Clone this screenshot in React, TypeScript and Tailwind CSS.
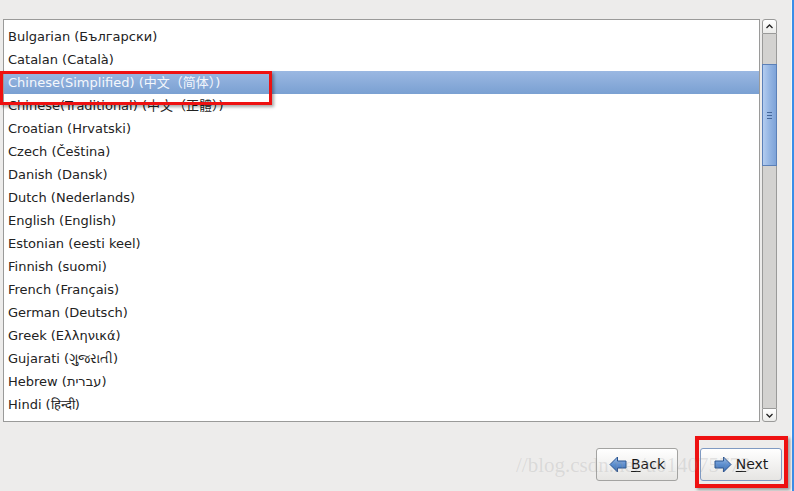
import React from "react";

const langs: string[] = [
  "Bulgarian (Български)",
  "Catalan (Català)",
  "Chinese(Simplified) (中文（简体）)",
  "Chinese(Traditional) (中文（正體）)",
  "Croatian (Hrvatski)",
  "Czech (Čeština)",
  "Danish (Dansk)",
  "Dutch (Nederlands)",
  "English (English)",
  "Estonian (eesti keel)",
  "Finnish (suomi)",
  "French (Français)",
  "German (Deutsch)",
  "Greek (Ελληνικά)",
  "Gujarati (ગુજરાતી)",
  "Hebrew (עברית)",
  "Hindi (हिन्दी)",
];

function Arrow({ dir }: { dir: "left" | "right" }) {
  return (
    <svg width="18" height="17" viewBox="0 0 18 17" style={{ transform: dir === "right" ? "scaleX(-1)" : undefined }}>
      <defs>
        <linearGradient id={"ag" + dir} x1="0" y1="0" x2="0" y2="1">
          <stop offset="0" stopColor="#9fbfe8" />
          <stop offset="0.5" stopColor="#5d8fd0" />
          <stop offset="1" stopColor="#3a6db3" />
        </linearGradient>
      </defs>
      <path
        d="M1 8.5 L8.5 1 L8.5 5 L17 5 L17 12 L8.5 12 L8.5 16 Z"
        fill={`url(#ag${dir})`}
        stroke="#2a5490"
        strokeWidth="1"
        strokeLinejoin="round"
      />
    </svg>
  );
}

export default function App() {
  return (
    <div
      className="w-[794px] h-[491px] bg-[#edeceb] flex overflow-hidden relative"
      style={{ fontFamily: '"DejaVu Sans", "Noto Sans CJK SC", sans-serif' }}
    >
      <div className="flex-1 flex flex-col pt-[19px] pl-[3px]">
        <div className="flex gap-[2px]">
          <div className="w-[757px] h-[403px] border border-[#9a9a99] bg-white pt-[5px] overflow-hidden relative">
            {langs.map((l, i) => (
              <div
                key={l}
                className={
                  "h-[23px] pl-[4px] flex items-center text-[13px] leading-none whitespace-nowrap " +
                  (i === 2
                    ? "bg-gradient-to-b from-[#9bb8e2] to-[#7aa0d2] text-[#f4f7fc]"
                    : "text-[#222222]")
                }
              >
                {l}
              </div>
            ))}
          </div>
          <div className="w-[15px] h-[403px] flex flex-col">
            <div className="h-[15px] border border-[#9a9a99] rounded-t-[3px] bg-gradient-to-b from-white to-[#ececea] flex items-center justify-center">
              <svg width="7" height="5" viewBox="0 0 7 5">
                <path d="M0.5 4 L3.5 1 L6.5 4" fill="none" stroke="#222" strokeWidth="1.3" />
              </svg>
            </div>
            <div className="flex-1 bg-[#d3d2d0] border-x border-[#9a9a99] flex flex-col pt-[30px]">
              <div className="h-[102px] -mx-[1px] border border-[#5b80b8] bg-gradient-to-r from-[#b3ccef] via-[#94b5e3] to-[#7ea3d8] flex flex-col items-center justify-center gap-[2px]">
                <div className="w-[5px] h-[1px] bg-[#45679a]" />
                <div className="w-[5px] h-[1px] bg-[#45679a]" />
                <div className="w-[5px] h-[1px] bg-[#45679a]" />
              </div>
            </div>
            <div className="h-[14px] border border-[#9a9a99] rounded-b-[3px] bg-gradient-to-b from-white to-[#ececea] flex items-center justify-center">
              <svg width="7" height="5" viewBox="0 0 7 5">
                <path d="M0.5 1 L3.5 4 L6.5 1" fill="none" stroke="#222" strokeWidth="1.3" />
              </svg>
            </div>
          </div>
        </div>
        <div className="flex justify-end gap-[22px] pr-[9px] mt-[26px]">
          <div className="w-[82px] h-[33px] rounded-[3px] border border-[#a3a3a1] bg-gradient-to-b from-white to-[#e6e5e3] flex items-center justify-center gap-[4px] text-[14px] text-[#1a1a1a]">
            <Arrow dir="left" />
            <span>
              <span className="underline underline-offset-2">B</span>ack
            </span>
          </div>
          <div className="w-[82px] h-[33px] rounded-[3px] border border-[#7f9ac2] bg-gradient-to-b from-white to-[#e6e5e3] flex items-center justify-center gap-[4px] text-[14px] text-[#1a1a1a]">
            <Arrow dir="right" />
            <span>
              <span className="underline underline-offset-2">N</span>ext
            </span>
          </div>
        </div>
      </div>
      <div className="w-[1px] bg-[#f7f7f6]" />
      <div className="w-[2px] bg-[#3b8ee8]" />

      <div className="absolute left-0 top-[71px] w-[272px] h-[34px] border-[3px] border-[#ee1111] shadow-[2px_2px_3px_rgba(0,0,0,0.35)] pointer-events-none" />
      <div className="absolute left-[695px] top-[436px] w-[93px] h-[52px] border-[4px] border-[#ee1111] shadow-[2px_2px_3px_rgba(0,0,0,0.35)] pointer-events-none" />
      <div
        className="absolute left-[516px] top-[450px] text-[21px] text-[rgba(150,150,150,0.22)] whitespace-nowrap pointer-events-none"
        style={{ fontFamily: '"Liberation Serif", serif' }}
      >
        //blog.csdn.net/u014075773
      </div>
    </div>
  );
}
